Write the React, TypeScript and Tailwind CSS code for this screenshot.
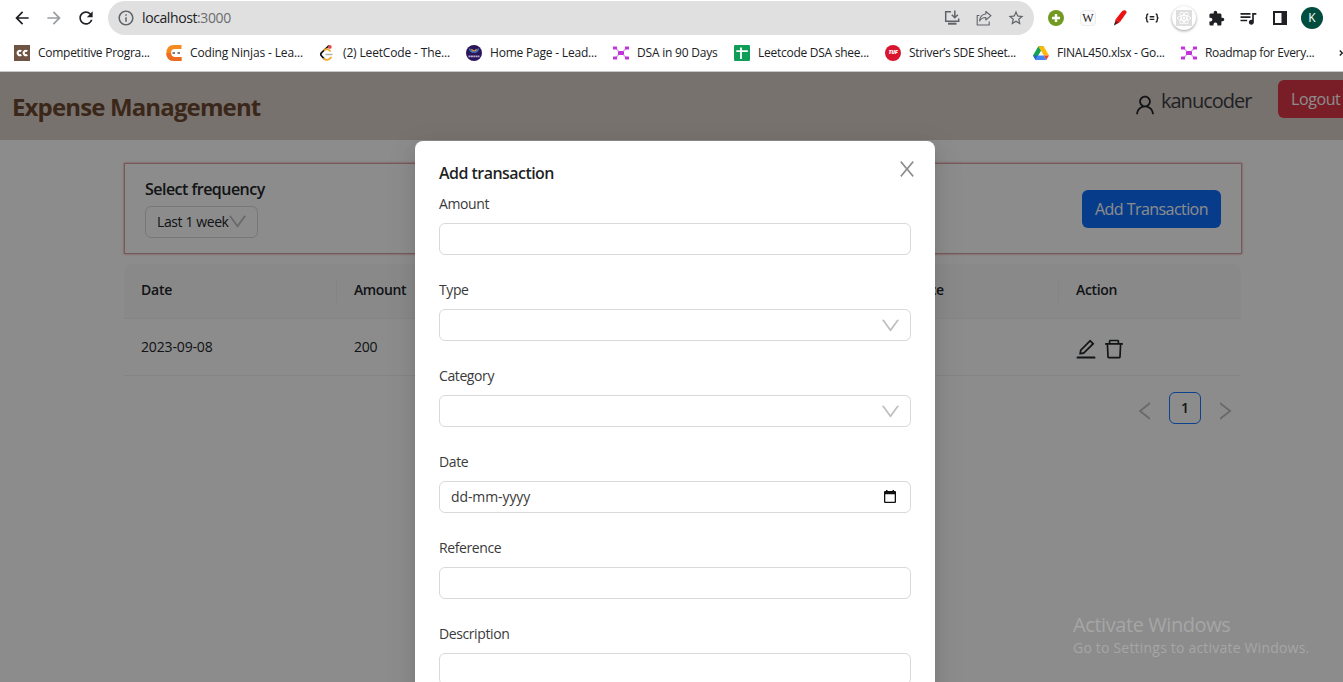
import React from "react";
import { AiOutlineClose, AiOutlineDelete, AiOutlineDown, AiOutlineEdit, AiOutlineLeft, AiOutlineRight, AiOutlineUser } from "react-icons/ai";
import { MdArrowBack, MdArrowForward, MdExtension, MdInfoOutline, MdQueueMusic, MdRefresh, MdStarOutline } from "react-icons/md";

function NodesIcon() {
  return (
    <svg className="size-4" viewBox="0 0 16 16">
      <path d="M3 3.5 5.5 6M13 3.5 10.5 6M3 12.5 5.5 10M13 12.5 10.5 10" stroke="#dda0ea" strokeWidth="1.2" />
      <g fill="#c233dc">
        <rect x="0" y="1.500" width="4" height="3" rx=".5" />
        <rect x="12" y="1.500" width="4" height="3" rx=".5" />
        <rect x="0" y="11.500" width="4" height="3" rx=".5" />
        <rect x="12" y="11.500" width="4" height="3" rx=".5" />
        <rect x="5" y="6" width="6" height="4" rx=".8" />
      </g>
    </svg>
  );
}

function ChefIcon() {
  return (
    <svg className="size-4" viewBox="0 0 16 16">
      <rect width="16" height="16" fill="#6f5443" />
      <path d="M7.300 6.300A2.200 2.200 0 1 0 7.300 9.700M13.300 6.300A2.200 2.200 0 1 0 13.300 9.700" fill="none" stroke="#fff" strokeWidth="2" />
    </svg>
  );
}

function NinjaIcon() {
  return (
    <svg className="size-4" viewBox="0 0 16 16">
      <path d="M15.500 0H8C3 0 .4 3.500.4 8S3 16 8 16h7.500v-4H8.500C6.500 12 5 10.500 5 8s1.500-4 3.500-4h7z" fill="#f58a1f" />
      <path d="M.4 8C.4 12.500 3 16 8 16h7.500v-4H8.500C6.500 12 5 10.500 5 8z" fill="#ee6c22" />
      <path d="M6.500 8h2.500M11.500 8H14" stroke="#555" strokeWidth="1.300" />
    </svg>
  );
}

function LeetIcon() {
  return (
    <svg className="size-4" viewBox="0 0 16 16" fill="none" strokeLinecap="round">
      <path d="M9.500 1 2.600 7.600Q1 9.200 2.600 11L5 13.600" stroke="#111" strokeWidth="1.700" />
      <path d="M5 13.600Q7.500 16.200 10.500 13.800L12 12.500M5.500 5Q8.500 3 11 6" stroke="#f5a623" strokeWidth="1.700" />
      <path d="M7 9.500h6" stroke="#b3b3b3" strokeWidth="1.500" />
      <circle cx="10.800" cy="1.900" r="1.900" fill="#df4b4b" />
    </svg>
  );
}

function LeadIcon() {
  return (
    <svg className="size-4" viewBox="0 0 16 16">
      <circle cx="8" cy="8" r="8" fill="#2b155b" />
      <path d="M3.500 3.500a4.600 4.600 0 0 0 9 0" fill="none" stroke="#3d7fc4" strokeWidth="1.300" />
      <path d="M5.500 4a2.600 2.600 0 0 0 5 0" fill="none" stroke="#d9953d" strokeWidth="1.200" />
      <path d="M2.500 11.300h11" stroke="#b9aed0" strokeWidth="1.700" strokeDasharray="2 .4" />
    </svg>
  );
}

function SheetIcon() {
  return (
    <svg className="size-4" viewBox="0 0 16 16">
      <rect width="16" height="16" rx="1.200" fill="#0f9d58" />
      <path d="M7 2.500V14M2.300 6.200h11.500" stroke="#fff" strokeWidth="1.800" />
    </svg>
  );
}

function TufIcon() {
  return (
    <span className="flex size-4 items-center justify-center rounded-full bg-[#d8152d] text-[5.5px] leading-none font-extrabold text-white italic">TUF</span>
  );
}

function DriveIcon() {
  return (
    <svg className="size-4" viewBox="0 0 16 16">
      <path d="M5.400 1.300h5.200L8 5.700z" fill="#1a8f43" />
      <path d="M5.400 1.300 0 10.600l2.600 4.300L8 5.700z" fill="#12a452" />
      <path d="M10.600 1.300H5.400l5.400 9.300H16z" fill="#fdbb07" />
      <path d="M0 10.600h5.300l-2.600 4.300z" fill="#2666cf" />
      <path d="M5.300 10.600 2.600 14.900h10.700l-2.600-4.300z" fill="#4285f4" />
      <path d="M10.700 10.600H16l-2.700 4.300z" fill="#e94335" />
    </svg>
  );
}

const bookmarks = [
  { icon: <ChefIcon />, label: "Competitive Progra...", box: "w-[152px] tracking-[-0.27px]" },
  { icon: <NinjaIcon />, label: "Coding Ninjas - Lea...", box: "w-[153px] tracking-[-0.15px]" },
  { icon: <LeetIcon />, label: "(2) LeetCode - The...", box: "w-[147px] tracking-[-0.15px]" },
  { icon: <LeadIcon />, label: "Home Page - Lead...", box: "w-[147px] tracking-[-0.2px]" },
  { icon: <NodesIcon />, label: "DSA in 90 Days", box: "w-[121px] tracking-[-0.2px]" },
  { icon: <SheetIcon />, label: "Leetcode DSA shee...", box: "w-[151px] tracking-[-0.26px]" },
  { icon: <TufIcon />, label: "Striver’s SDE Sheet...", box: "w-[148px] tracking-[-0.3px]" },
  { icon: <DriveIcon />, label: "FINAL450.xlsx - Go...", box: "w-[148px] tracking-[-0.25px]" },
  { icon: <NodesIcon />, label: "Roadmap for Every...", box: "w-[150px] tracking-[-0.33px]" },
];

function InstallIcon() {
  return (
    <svg className="size-4" viewBox="0 0 16 16" fill="none" stroke="#5f6368" strokeWidth="1.500">
      <path d="M7 1.700H1.700v9.500h13V8.500M10.800.5v6.700M7.800 4.700l3 3 3-3" />
      <path d="M4 12.700h8.500v2H4z" fill="#5f6368" stroke="none" />
    </svg>
  );
}

function ShareIcon() {
  return (
    <svg className="size-4" viewBox="0 0 16 16" fill="none" stroke="#5f6368" strokeWidth="1.100" strokeLinejoin="round">
      <path d="M3.500 5.500H1.200v9.500h12v-3.500" />
      <path d="M9.800 1.500 15 5.700 9.800 10V7.500C7 7.500 5 8.500 3.600 11c.3-4 2.500-6.600 6.200-7z" />
    </svg>
  );
}

function Extensions() {
  return (
    <div className="flex items-center">
      <span className="flex w-8 justify-center">
        <svg className="size-4" viewBox="0 0 16 16"><circle cx="8" cy="8" r="8" fill="#739a20" /><path d="M8 4v8M4 8h8" stroke="#fff" strokeWidth="2.400" /></svg>
      </span>
      <span className="flex w-8 justify-center">
        <span className="flex size-4 items-center justify-center rounded-sm border border-[#ececec] bg-[#fafafa] font-['Liberation_Serif',serif] text-[12px] leading-none text-[#222]">W</span>
      </span>
      <span className="flex w-8 justify-center">
        <svg className="size-4" viewBox="0 0 16 16"><path d="M10 1.200Q12 -.3 13.500.5q1.600 1 .8 2.500L8 12 3.500 9.500z" fill="#ee1111" /><path d="M3.500 9.500 8 12l-3.500 2.200-1.700-.9z" fill="#b30c0c" /><path d="M3 12 1.800 15.700 4.800 13.800z" fill="#222" /></svg>
      </span>
      <span className="flex w-8 justify-center">
        <svg className="size-4" viewBox="0 0 16 16" fill="none" stroke="#222" strokeWidth="1.400"><path d="M4.300 4Q2.800 4 2.800 5.500v1Q2.800 8 1.500 8q1.300 0 1.300 1.500v1Q2.800 12 4.300 12M11.700 4q1.500 0 1.500 1.500v1q0 1.500 1.300 1.500-1.300 0-1.300 1.500v1q0 1.500-1.500 1.500M5.700 6.800h4.600M5.700 9.400h4.600" /></svg>
      </span>
      <span className="flex w-8 justify-center">
        <span className="flex size-6 items-center justify-center rounded-full bg-white shadow-[0_1px_3px_rgba(0,0,0,.4)]">
          <svg className="size-4" viewBox="0 0 16 16"><rect width="16" height="16" fill="#dedede" /><g fill="none" stroke="#fff" strokeWidth=".9"><ellipse cx="8" cy="8" rx="6.500" ry="2.500" /><ellipse cx="8" cy="8" rx="6.500" ry="2.500" transform="rotate(60 8 8)" /><ellipse cx="8" cy="8" rx="6.500" ry="2.500" transform="rotate(120 8 8)" /></g><circle cx="8" cy="8" r="1.200" fill="#fff" /></svg>
        </span>
      </span>
      <span className="flex w-8 justify-center"><MdExtension className="size-[17px] text-[#202124]" /></span>
      <span className="flex w-8 justify-center"><MdQueueMusic className="size-5 text-[#202124]" /></span>
      <span className="flex w-8 justify-center">
        <svg className="size-4" viewBox="0 0 16 16"><path fillRule="evenodd" d="M1 1h14v14H1zM3 3v10h6.500V3z" fill="#202124" /></svg>
      </span>
      <span className="flex w-8 justify-center">
        <span className="flex size-[22px] items-center justify-center rounded-full bg-[#004d40] text-[12px] leading-none text-white">K</span>
      </span>
    </div>
  );
}

function BrowserChrome() {
  return (
    <header className="h-[72px] shrink-0 border-b border-[#c9c8c5] bg-white text-[#202124]">
      <div className="flex h-9 items-center">
        <div className="flex w-[108px] items-center gap-3 pl-3">
          <MdArrowBack className="size-5" />
          <MdArrowForward className="size-5 text-[#9a9c9f]" />
          <MdRefresh className="size-5" />
        </div>
        <div className="flex h-[34px] w-[926px] items-center rounded-full bg-[#e0e0e0] pr-[9px] pl-[9px]">
          <MdInfoOutline className="size-[18px] text-[#5f6368]" />
          <span className="ml-[7px] flex-1 pb-px text-[14px] tracking-[-0.4px] whitespace-nowrap">localhost<span className="text-[#6b6d70]">:3000</span></span>
          <div className="flex items-center gap-4 text-[#5f6368]">
            <InstallIcon />
            <ShareIcon />
            <MdStarOutline className="-ml-px size-[18px]" />
          </div>
        </div>
        <div className="pl-1.5"><Extensions /></div>
      </div>
      <nav className="flex h-[34px] items-center pl-[14px] text-[12px]">
        {bookmarks.map((b, i) => (
          <span key={i} className={`flex shrink-0 items-center gap-2 whitespace-nowrap ${b.box}`}>
            <span className="shrink-0">{b.icon}</span>{b.label}
          </span>
        ))}
        <svg className="ml-2 h-2 w-2 shrink-0" viewBox="0 0 8 8" fill="none" stroke="#202124" strokeWidth="1.500">
          <path d="M.8 1.500 3.300 4 .8 6.500M4.300 1.500 6.800 4 4.300 6.500" />
        </svg>
      </nav>
    </header>
  );
}

function ExpensePage() {
  return (
    <div className="h-full bg-white text-[#212529]">
      <div className="flex h-[68px] items-start bg-[#dbd0ca]">
        <h1 className="flex-1 pt-[17px] pl-3 text-[24px] leading-[36px] font-bold tracking-[-0.86px] text-[#6c4830]">Expense Management</h1>
        <div className="flex w-[142px] items-center pt-[13px] text-[20px] leading-[30px] tracking-[-1px]">
          <AiOutlineUser className="mt-2 mr-1 -ml-[3px] size-6 shrink-0" />
          <span className="text-[#3a3d41]">kanucoder</span>
        </div>
        <button className="mt-2 -mr-4 h-[38px] w-[81px] rounded-md bg-[#dc3545] pl-[13px] text-left text-[16px] tracking-[-0.4px] text-white">Logout</button>
      </div>
      <main className="ml-[124px] w-[1118px] pt-[23px]">
        <section className="flex h-[91px] items-center justify-between border border-[#d9a0a6] pr-5 pl-5 shadow-[0_0_2px_#e07a85]">
          <div className="-mt-[3px]">
            <h2 className="text-[16px] leading-[24px] font-semibold tracking-[-0.52px]">Select frequency</h2>
            <div className="mt-[5px] flex h-8 w-[113px] items-center rounded-md border border-[#d9d9d9] pl-[11px] text-[14px] tracking-[-0.4px] whitespace-nowrap">
              <span className="w-[69px]">Last 1 week</span>
              <AiOutlineDown className="size-[23px] shrink-0 text-[#bfbfbf]" />
            </div>
          </div>
          <button className="h-[38px] w-[139px] rounded-md bg-[#0d6efd] text-[16px] tracking-[-0.56px] whitespace-nowrap text-white">Add Transaction</button>
        </section>
        <div className="mt-2.5 pr-px text-[14px] tracking-[-0.25px]">
          <div className="flex h-[55px] items-center rounded-t-lg border-b border-[#f0f0f0] bg-[#fafafa] font-semibold">
            <span className="w-[213px] border-r border-[#f0f0f0] pb-[3px] pl-[17px]">Date</span>
            <span className="w-[213px] border-r border-[#f0f0f0] pb-[3px] pl-[17px] tracking-[-0.4px]">Amount</span>
            <span className="w-[213px] border-r border-[#f0f0f0] pb-[3px] pl-[17px]">Type</span>
            <span className="w-[98px] pb-[3px] pl-[17px]">Category</span>
            <span className="flex-1 border-r border-[#f0f0f0] pb-[3px] pl-[17px]">Reference</span>
            <span className="w-[182px] pb-[3px] pl-[17px] tracking-[-0.35px]">Action</span>
          </div>
          <div className="flex h-[57px] items-center border-b border-[#f0f0f0]">
            <span className="w-[213px] pb-0.5 pl-[17px] tracking-[-0.15px]">2023-09-08</span>
            <span className="flex-1 pb-0.5 pl-[17px]">200</span>
            <div className="flex w-[182px] gap-1 pt-1 pl-[15px]">
              <AiOutlineEdit className="size-6" />
              <AiOutlineDelete className="size-6" />
            </div>
          </div>
          <div className="flex items-center justify-end pt-4 pr-1">
            <AiOutlineLeft className="mt-1.5 size-6 text-[#bfbfbf]" />
            <span className="mr-3 ml-3 flex size-8 items-center justify-center rounded-md border border-[#1677ff] pb-px font-semibold">1</span>
            <AiOutlineRight className="mt-1.5 size-6 text-[#bfbfbf]" />
          </div>
        </div>
      </main>
    </div>
  );
}

function CalendarIcon() {
  return (
    <svg className="h-[13px] w-3" viewBox="0 0 12 13">
      <path fillRule="evenodd" d="M2 0h1.500v1h5V0H10v1h1q1 0 1 1v10q0 1-1 1H1q-1 0-1-1V2q0-1 1-1h1zM1.300 4.200v7.500h9.400V4.200z" fill="#111" />
    </svg>
  );
}

const fields = [
  { label: "Amount", kind: "text" },
  { label: "Type", kind: "select" },
  { label: "Category", kind: "select" },
  { label: "Date", kind: "date" },
  { label: "Reference", kind: "text" },
  { label: "Description", kind: "text" },
];

function TransactionModal() {
  return (
    <div role="dialog" className="h-[700px] w-[520px] rounded-lg bg-white px-6 pt-5 text-[rgba(0,0,0,.88)] shadow-[0_6px_16px_0_rgba(0,0,0,.08),0_3px_6px_-4px_rgba(0,0,0,.12),0_9px_28px_8px_rgba(0,0,0,.05)]">
      <div className="flex justify-between">
        <h2 className="text-[16px] leading-6 font-semibold tracking-[-0.54px]">Add transaction</h2>
        <AiOutlineClose className="-mt-1 -mr-1.5 h-6 w-5 text-[#8c8c8c]" preserveAspectRatio="none" />
      </div>
      <form className="flex flex-col">
        {fields.map((f) => (
          <label key={f.label} className="flex h-[86px] flex-col text-[14px] leading-[22px] tracking-[-0.4px] text-[#3a3a3a]">
            <span className="mt-2">{f.label}</span>
            <span className="mt-2 flex h-8 shrink-0 items-center justify-between rounded-md border border-[#d9d9d9] pr-2 pl-[11px]">
              {f.kind === "date" && <><span className="tracking-[-0.1px]">dd-mm-yyyy</span><span className="pr-1.5 pb-px"><CalendarIcon /></span></>}
              {f.kind === "select" && <><span /><AiOutlineDown className="size-[23px] text-[#bfbfbf]" /></>}
            </span>
          </label>
        ))}
      </form>
    </div>
  );
}

export default function App() {
  return (
    <div className="flex h-[682px] w-[1343px] flex-col overflow-hidden font-['Open_Sans','Noto_Sans',sans-serif]">
      <BrowserChrome />
      <div className="relative h-[610px] overflow-hidden">
        <ExpensePage />
        <div className="absolute inset-0 flex items-start overflow-hidden bg-black/45 pt-[69px] pl-[415px]">
          <TransactionModal />
        </div>
        <div className="absolute top-[539px] left-[1073px] whitespace-nowrap text-[#a6a6a6]">
          <p className="text-[20px] leading-[28px] tracking-[-0.42px]">Activate Windows</p>
          <p className="text-[14px] leading-[18px] tracking-[0.2px]">Go to Settings to activate Windows.</p>
        </div>
      </div>
    </div>
  );
}
